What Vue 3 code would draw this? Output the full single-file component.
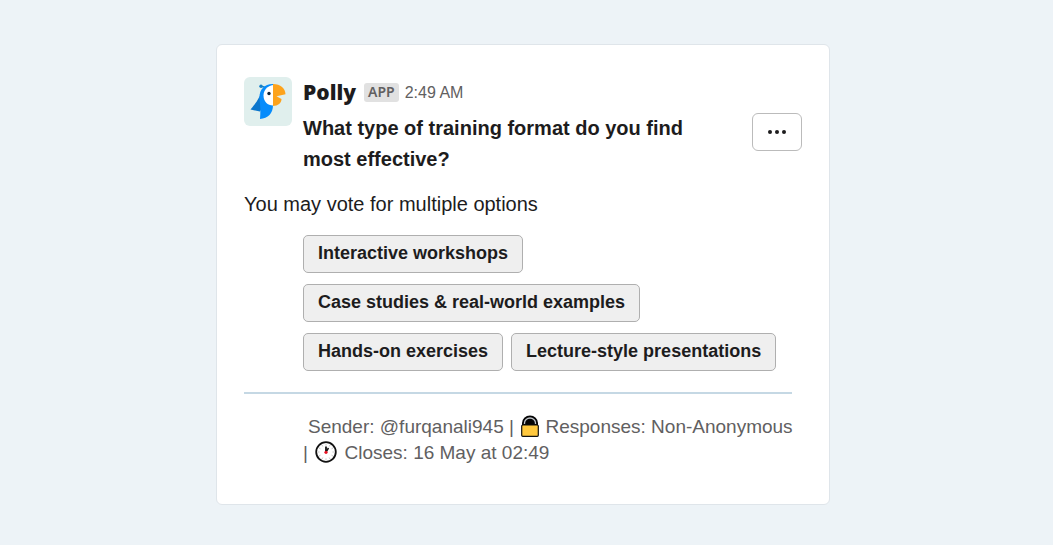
<script setup>
const options = [
  'Interactive workshops',
  'Case studies & real-world examples',
  'Hands-on exercises',
  'Lecture-style presentations',
]
const ticks = [0, 30, 60, 90, 120, 150, 180, 210, 240, 270, 300, 330]
</script>

<template>
  <main class="page">
    <article class="card">
      <header class="head">
        <svg class="avatar" viewBox="0 0 48 49" aria-hidden="true">
          <rect width="48" height="49" rx="6" fill="#e0efed" />
          <path d="M17 9.500q3.500-.5 5 2.500" fill="none" stroke="#1681c9" stroke-width="1.400" />
          <circle cx="17" cy="9.300" r="1.700" fill="#1681c9" />
          <path d="M17.500 16C14.500 21 14 24 6.500 32.500L16 34.500L21 26Z" fill="#0b76cc" />
          <path d="M29 7C20 7 15.500 13 15.500 20C15.500 26 17 29 16 42C24 41.500 29 36.500 29 28Z" fill="#078cfb" />
          <path d="M29 8C23.500 9 19.500 13 19.500 18.500C19.500 24.500 23.500 28.500 29 28.500Z" fill="#fff" />
          <circle cx="25" cy="16.500" r="1.700" fill="#10243a" />
          <path d="M29 7C36.500 7 41.500 11.500 41.500 17.300L32.500 19.300L37.500 22C37.500 26 34 29 29 29Z" fill="#fda31c" />
        </svg>
        <div class="title">
          <div class="byline">
            <strong class="name">Polly</strong>
            <span class="tag">APP</span>
            <time class="time">2:49 AM</time>
          </div>
          <h1 class="question">What type of training format do you find most effective?</h1>
        </div>
        <button class="more" type="button" aria-label="More actions">
          <svg viewBox="0 0 18 6" width="18" height="6" aria-hidden="true">
            <circle cx="2" cy="3" r="2" />
            <circle cx="9" cy="3" r="2" />
            <circle cx="16" cy="3" r="2" />
          </svg>
        </button>
      </header>

      <p class="hint">You may vote for multiple options</p>

      <div class="options">
        <button v-for="option in options" :key="option" class="option" type="button">{{ option }}</button>
      </div>

      <footer class="meta">
        <p class="details">
          <span class="detail">Sender: @furqanali945</span> <span>|</span> <svg class="icon lock" viewBox="0 0 18 22" aria-hidden="true">
            <path d="M1 12V8a8 7.500 0 0 1 16 0v4Z" fill="#050505" />
            <path d="M3.500 9V8a5.500 5 0 0 1 11 0v1" fill="none" stroke="#bfc3c8" stroke-width="1.300" />
            <rect x=".7" y="10" width="16.600" height="11.300" rx="1" fill="#ffc83d" stroke="#111" stroke-width="1.200" />
          </svg> <span class="detail">Responses: Non-Anonymous</span> <span>|</span> <svg class="icon clock" viewBox="0 0 22 22" aria-hidden="true">
            <circle cx="11" cy="11" r="9.800" fill="#fff" stroke="#111" stroke-width="1.800" />
            <path v-for="t in ticks" :key="t" d="M11 3.200v1.300" :transform="`rotate(${t} 11 11)`" stroke="#aaa" stroke-width=".8" />
            <path d="M11 11V5.500" stroke="#111" stroke-width="1.800" />
            <path d="M11 11L13.500 7" stroke="#111" stroke-width="1.500" />
            <circle cx="11" cy="11.300" r="1.600" fill="#e81224" />
          </svg> <span class="detail">Closes: 16 May at 02:49</span>
        </p>
      </footer>
    </article>
  </main>
</template>

<style>
body {
  background: #edf3f7;
}
</style>

<style scoped>
.page {
  box-sizing: border-box;
  min-height: 100vh;
  padding: 44px 24px 40px 17px;
  background: #edf3f7;
  color: #1d1c1d;
  font-family: "Liberation Sans", Arial, sans-serif;
}
.card {
  box-sizing: border-box;
  max-width: 614px;
  margin: 0 auto;
  padding: 32px 27px 38px;
  background: #fff;
  border: 1px solid #dfe5ea;
  border-radius: 6px;
}
.head {
  display: flex;
  align-items: flex-start;
}
.avatar {
  flex: none;
  width: 48px;
  height: 49px;
  margin-right: 11px;
}
.title {
  flex: 1;
  min-width: 0;
}
.byline {
  display: flex;
  align-items: center;
  height: 31px;
}
.name {
  font: 900 21px/31px "Noto Sans", sans-serif;
}
.tag {
  margin: 0 6px 0 8px;
  padding: 0 4px 1px;
  border-radius: 3px;
  background: #e1e1e1;
  color: #616061;
  font: 600 14px/18px "Noto Sans", sans-serif;
}
.time {
  color: #616061;
  font-size: 16px;
}
.question {
  max-width: 400px;
  margin: 5px 0 0;
  font-size: 20px;
  line-height: 31px;
}
.more {
  display: flex;
  flex: none;
  align-items: center;
  justify-content: center;
  width: 50px;
  height: 38px;
  margin-top: 36px;
  padding: 0;
  border: 1px solid #bbb;
  border-radius: 6px;
  background: #fff;
  fill: #1d1c1d;
}
.hint {
  margin: 14px 0 0;
  font-size: 20px;
  line-height: 30px;
}
.options {
  display: flex;
  flex-wrap: wrap;
  gap: 11px 8px;
  margin: 16px 10px 0 59px;
}
.option {
  height: 38px;
  padding: 0 14px 2px;
  border: 1px solid #afafaf;
  border-radius: 5px;
  background: #efefef;
  color: #1d1c1d;
  font: bold 18px/24px "Liberation Sans", Arial, sans-serif;
}
.meta {
  margin: 21px 10px 0 0;
  padding: 20px 0 0 59px;
  border-top: 2px solid #c5d8e4;
}
.details {
  margin: 0 -4px 0 0;
  color: #616061;
  font-size: 19px;
  line-height: 26px;
  text-indent: 5px;
}
.detail {
  white-space: nowrap;
}
.icon {
  margin: 0 2px;
  vertical-align: -4px;
}
.lock {
  width: 18px;
  height: 22px;
  margin-right: 1px;
}
.clock {
  width: 22px;
  height: 22px;
}
</style>
